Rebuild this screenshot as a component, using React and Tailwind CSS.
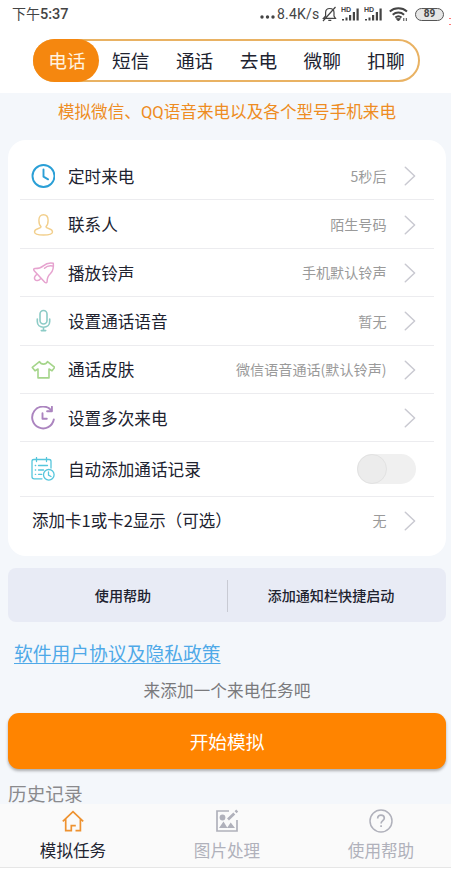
const Chevron = () => (
  <svg
    className="w-3 h-5 shrink-0"
    viewBox="0 0 12 20"
    fill="none"
    stroke="#c9c9d1"
    strokeWidth="1.5"
    strokeLinecap="round"
    strokeLinejoin="round">
    <path d="M1.3 1.3 10.600 10 1.300 18.700" />
  </svg>
);

const Icon = ({ color, width = 1.6, children }) => (
  <svg
    className="w-6 h-6"
    viewBox="0 0 24 24"
    fill="none"
    stroke={color}
    strokeWidth={width}
    strokeLinecap="round"
    strokeLinejoin="round">
    {children}
  </svg>
);

const ClockIcon = () => (
  <Icon color="#2a9fd6" width={1.9}>
    <circle cx="12.500" cy="12" r="11" />
    <path d="M12.500 5.500v7.200l4.600 2.600" />
  </Icon>
);

const ContactIcon = () => (
  <Icon color="#f2cf8c" width={1.4}>
    <path d="M10 13.500C8.500 12.300 7.900 9.800 7.900 7.200 7.900 3.600 9.600 1.800 12.500 1.800s4.600 1.800 4.600 5.400c0 2.600-.6 5.100-2.100 6.300 0 1.300 1.200 1.700 3.200 2.200 2.200.6 3.300 1.600 3.300 3.300 0 2.300-2.500 3-9 3s-9-.7-9-3c0-1.700 1.100-2.700 3.300-3.300 2-.5 3.200-.9 3.200-2.200Z" />
  </Icon>
);

const BellIcon = () => (
  <Icon color="#e6a3cf" width={1.5}>
    <path d="M22.300 2.300c-4-.7-7.300.2-10 2.600C10 6.900 7.500 7.600 4 7.600c-1.400 0-1.700 1.200-.8 2.200l10.600 11.400c1 1 2.300.6 2.300-.8 0-3.300 1-5.600 3.400-7.900 2.500-2.600 3.300-6 2.800-10.200Z" />
    <path d="M21.500 5c-3.200-.6-5.800.2-8 2.300M5.300 13.800c-2 1.500-2.300 3.700-1.200 4.900s3.500 1 5.200-.8" />
  </Icon>
);

const MicIcon = () => (
  <Icon color="#8ccbc6" width={1.6}>
    <rect x="9" y="1.500" width="7" height="13.500" rx="3.500" />
    <path d="M6.300 10v2.500c0 3.500 2.600 5.700 6.200 5.700s6.200-2.200 6.200-5.700V10M12.500 18.500v3M10.300 21.600h4.400" />
  </Icon>
);

const ShirtIcon = () => (
  <Icon color="#a5d58b" width={1.6}>
    <path d="M8.500 3.600 1.300 9.400l2.700 3.400 3-1.800v8.900h11V11l3 1.800 2.700-3.400-7.200-5.800c-.8 1.700-2.300 2.500-4 2.500s-3.200-.8-4-2.500Z" />
  </Icon>
);

const RepeatIcon = () => (
  <Icon color="#ab84bf" width={1.9}>
    <path d="M20.300 4.300A10.900 10.900 0 1 0 22.800 13.500" />
    <path d="M20.900.8v4.500h-4.800M11.500 7.300v5.500h4.300" />
  </Icon>
);

const RecordIcon = () => (
  <Icon color="#55c6dc" width={1.3}>
    <path d="M11 21.800H3.200c-1.200 0-2.200-.8-2.200-2V4.300c0-1 .8-1.800 2-1.800h15c1.200 0 2 .8 2 1.800V11M5.500.6v4M15.500.6v4" />
    <path d="M4.300 8.500h.4M7.500 8.500h9M4.300 13h.4M7.500 13h5M4.300 17.300h.4M7.500 17.300h3.300" />
    <circle cx="17.800" cy="17.800" r="5.300" />
    <path d="M17.500 15v3.200l2.500 1.300" />
  </Icon>
);

const rows = [
  { icon: ClockIcon, title: "定时来电", value: "5秒后" },
  { icon: ContactIcon, title: "联系人", value: "陌生号码" },
  { icon: BellIcon, title: "播放铃声", value: "手机默认铃声" },
  { icon: MicIcon, title: "设置通话语音", value: "暂无" },
  { icon: ShirtIcon, title: "通话皮肤", value: "微信语音通话(默认铃声)" },
  { icon: RepeatIcon, title: "设置多次来电", value: "" },
];

const tabs = ["电话", "短信", "通话", "去电", "微聊", "扣聊"];

const Signal = () => (
  <svg className="w-[19px] h-4" viewBox="0 0 19 16" fill="#444">
    <text
      x="0"
      y="6"
      fontSize="7"
      fontWeight="bold"
      fontFamily="Liberation Sans, sans-serif">
      HD
    </text>
    <path d="M1 13h2v1.500H1zM4.500 11.500h2v3h-2zM8 9h2.200v5.500H8zM11.800 6H14v8.500h-2.200zM15.500 2.500h2.200v12h-2.200z" />
  </svg>
);

const StatusBar = () => (
  <div className="h-7 pl-3 pr-2 flex items-center justify-between text-[#444]">
    <span className="text-[14px]">
      下午
      <span className="font-['Roboto'] font-medium text-[14.500px]">5:37</span>
    </span>
    <div className="flex items-center">
      <svg className="w-4 h-4 mr-px" viewBox="0 0 16 16" fill="#444">
        <circle cx="2" cy="11" r="1.700" />
        <circle cx="7.500" cy="11" r="1.700" />
        <circle cx="13" cy="11" r="1.700" />
      </svg>
      <span className="w-[45px] font-['Roboto'] text-sm leading-none tracking-[0.2px]">
        8.4K/s
      </span>
      <svg
        className="w-[15px] h-4 mr-1"
        viewBox="0 0 15 16"
        fill="none"
        stroke="#444"
        strokeWidth="1.200">
        <path d="M1.500 12.300h12L12 10V6.500C12 4 10.300 2.500 7.800 2.500S3.600 4 3.600 6.500V10ZM6.300 14.300h3M13.500 1 1 15" />
      </svg>
      <Signal />
      <span className="w-1" />
      <Signal />
      <svg
        className="w-5 h-4 mx-1.5"
        viewBox="0 0 20 16"
        fill="none"
        stroke="#444"
        strokeWidth="1.900">
        <path d="M.8 5.500c4.800-4.300 12.400-4.300 17.200 0M3.700 8.700c3.300-3 8.100-3 11.400 0M6.300 11.600c1.900-1.600 4.300-1.600 6.200 0" />
        <path d="m9.400 15-2-2.300h4z" strokeWidth="1" fill="#444" />
        <path d="M14.800 12v3M17.300 12v3" strokeWidth="1" />
      </svg>
      <span className="w-[29px] h-[13px] -mr-px rounded-full border-[1.500px] border-[#555] bg-[#e6e6e6] flex items-center justify-center font-['Roboto'] font-bold text-[10px] leading-none">
        89
      </span>
    </div>
  </div>
);

const HomeIcon = () => (
  <svg className="w-6 h-6" viewBox="0 0 24 24" fill="none" stroke="#ee9230" strokeWidth="1.700">
    <path d="M1.800 12.300 12 2.600l10.200 9.700M4.700 10v11.700h5.600v-5h4.500M19.400 10v11.700h-4.900" />
  </svg>
);

const ImageIcon = () => (
  <svg className="w-6 h-6" viewBox="0 0 24 24" fill="none" stroke="#b0b1bb" strokeWidth="1.700">
    <path d="M14 2H2v20h20V11" />
    <circle cx="7.500" cy="8.500" r="2.900" fill="#b0b1bb" stroke="none" />
    <path d="m4 19 4.500-6.500L12.500 19ZM12 19l3.700-5.500L20 19Z" fill="#b0b1bb" stroke="none" />
    <path d="m13 10.500 6.300-6M20.600 3.200l1.600-1.600" strokeWidth="2.800" />
  </svg>
);

const HelpIcon = () => (
  <svg className="w-6 h-6" viewBox="0 0 24 24" fill="none" stroke="#b0b1bb" strokeWidth="1.500">
    <circle cx="12" cy="12" r="11" />
    <path d="M8.700 9.500c0-2.200 1.400-3.400 3.300-3.400s3.300 1.200 3.300 3c0 2.600-3.200 2.600-3.200 5.400M12.100 16.200v1.900" strokeWidth="1.700" />
  </svg>
);

const navItems = [
  { icon: HomeIcon, title: "模拟任务", color: "text-[#222431]" },
  { icon: ImageIcon, title: "图片处理", color: "text-[#b0b1bb]" },
  { icon: HelpIcon, title: "使用帮助", color: "text-[#b0b1bb]" },
];

const App = () => {
  return (
    <div className="relative w-full h-[874px] overflow-hidden flex flex-col bg-[#f4f7fb] text-[#20222f] font-['Noto_Sans_CJK_SC',sans-serif]">
      <header className="h-[93px] shrink-0 bg-white">
        <StatusBar />
        <div className="mt-[11px] ml-[33px] w-[387px] h-[43px] rounded-full border-2 border-[#e9b263] flex">
          {tabs.map((tab, index) => (
            <div
              key={tab}
              className={`flex-1 flex items-center justify-center text-[18.700px] leading-none ${
                index === 0
                  ? "-my-0.5 -ml-0.5 pl-0.5 rounded-full bg-[#f5870f] text-[#fff3e0]"
                  : ""
              }`}>
              {tab}
            </div>
          ))}
        </div>
      </header>
      <div className="absolute right-0 top-[18px] w-0.5 h-[7px] border-y border-[#f77]" />

      <p className="h-[47px] pt-[6px] pl-[3px] shrink-0 text-center text-[16.600px] leading-6 text-[#ee8c22]">
        模拟微信、<span className="font-['Roboto']">QQ</span>
        语音来电以及各个型号手机来电
      </p>

      <section className="ml-2 mr-[5px] h-[416px] shrink-0 rounded-[18px] bg-white px-3 pt-3">
        {rows.map(({ icon: RowIcon, title, value }) => (
          <div
            key={title}
            className="h-[48.400px] pt-px pl-[11px] pr-[18px] flex items-center border-b border-[#ececef]">
            <RowIcon />
            <span className="ml-[13px] text-[16.600px]">{title}</span>
            <span className="ml-auto mr-[17.500px] text-[14.100px] text-[#9a9a9a]">
              {value}
            </span>
            <Chevron />
          </div>
        ))}
        <div className="h-[54.500px] pl-[11px] pr-[18px] flex items-center border-b border-[#ececef]">
          <RecordIcon />
          <span className="ml-[13px] text-[16.600px]">自动添加通话记录</span>
          <div className="ml-auto w-[59px] h-[30px] rounded-full bg-[#f0f0f0]">
            <div className="w-[30px] h-[30px] rounded-full border border-[#e2e2e2] bg-[#ececec]" />
          </div>
        </div>
        <div className="h-12 pl-3 pr-[18px] flex items-center">
          <span className="text-[16.500px]">添加卡1或卡2显示（可选）</span>
          <span className="ml-auto mr-[17.500px] text-[14px] text-[#9a9a9a]">
            无
          </span>
          <Chevron />
        </div>
      </section>

      <div className="mt-3 ml-2 mr-[5px] h-[54px] pt-px shrink-0 rounded-lg bg-[#e8ebf5] flex items-center text-[14.100px] font-medium">
        <span className="w-[219px] pl-[11px] text-center">使用帮助</span>
        <span className="w-px h-8 bg-[#c8cad3]" />
        <span className="flex-1 pr-3 text-center">添加通知栏快捷启动</span>
      </div>

      <a className="mt-[17px] ml-3.5 self-start h-7 leading-7 text-[18.800px] text-[#4fa9e8] underline underline-offset-2">
        软件用户协议及隐私政策
      </a>
      <p className="mt-[11px] h-6 leading-6 pl-[3px] text-center text-[16.700px] text-[#7a7a7d]">
        来添加一个来电任务吧
      </p>
      <button className="mt-[11px] ml-2 mr-[5px] h-14 shrink-0 rounded-[11px] bg-[#ff8400] text-[18.700px] text-white shadow-[0_2px_3px_rgba(0,0,0,0.3)]">
        开始模拟
      </button>
      <h2 className="mt-[10px] ml-2 h-[25px] shrink-0 leading-7 text-[18.700px] text-[#8a8a8d]">
        历史记录
      </h2>

      <nav className="-ml-1 -mr-[7px] h-16 shrink-0 flex bg-[#fafafa] border-b border-[#e6e6e6]">
        {navItems.map(({ icon: NavIcon, title, color }) => (
          <div
            key={title}
            className={`flex-1 pt-[5px] flex flex-col items-center ${color}`}>
            <NavIcon />
            <span className="mt-[5px] text-[16.600px] leading-6">{title}</span>
          </div>
        ))}
      </nav>
      <div className="flex-1 bg-white" />
    </div>
  );
};

export default App;
